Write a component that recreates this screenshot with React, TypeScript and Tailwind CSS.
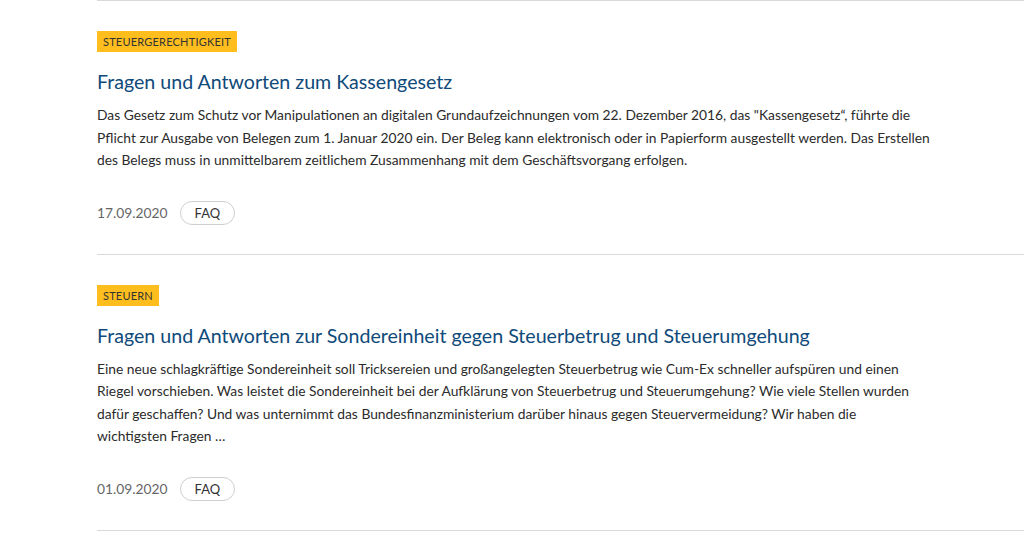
const items = [
  {
    tag: "Steuergerechtigkeit",
    title: "Fragen und Antworten zum Kassengesetz",
    text: "Das Gesetz zum Schutz vor Manipulationen an digitalen Grundaufzeichnungen vom 22. Dezember 2016, das \"Kassengesetz\u201c, führte die Pflicht zur Ausgabe von Belegen zum 1. Januar 2020 ein. Der Beleg kann elektronisch oder in Papierform ausgestellt werden. Das Erstellen des Belegs muss in unmittelbarem zeitlichem Zusammenhang mit dem Geschäftsvorgang erfolgen.",
    date: "17.09.2020",
  },
  {
    tag: "Steuern",
    title: "Fragen und Antworten zur Sondereinheit gegen Steuerbetrug und Steuerumgehung",
    text: "Eine neue schlagkräftige Sondereinheit soll Tricksereien und großangelegten Steuerbetrug wie Cum-Ex schneller aufspüren und einen Riegel vorschieben. Was leistet die Sondereinheit bei der Aufklärung von Steuerbetrug und Steuerumgehung? Wie viele Stellen wurden dafür geschaffen? Und was unternimmt das Bundesfinanzministerium darüber hinaus gegen Steuervermeidung? Wir haben die wichtigsten\u00a0Fragen\u00a0…",
    date: "01.09.2020",
  },
];

export default function App() {
  return (
    <div className="min-h-screen bg-white pl-[97px]" style={{ fontFamily: "Lato, 'Noto Sans', sans-serif" }}>
      <ul className="border-t border-[#d9d9d9]">
        {items.map((item, i) => (
          <li key={i} className="border-b border-[#d9d9d9] pt-[30px] pb-[29px]">
            <div className="flex">
              <span className="block bg-[#ffbe1e] px-[6px] py-[3px] text-[11px] leading-[15px] uppercase text-[#333] tracking-[0.2px]">
                {item.tag}
              </span>
            </div>
            <h2 className="mt-[16px] text-[19.6px] leading-[28px] text-[#0f4a7a]">{item.title}</h2>
            <p className="mt-[8px] max-w-[838px] text-[13.8px] leading-[22.5px] text-[#2b2b2b]">{item.text}</p>
            <div className="mt-[29px] flex items-center gap-[12px]">
              <span className="text-[13.8px] leading-[24px] text-[#666]">{item.date}</span>
              <span className="rounded-full border border-[#cfcfcf] px-[14px] py-[2px] text-[13px] leading-[18px] text-[#333]">FAQ</span>
            </div>
          </li>
        ))}
      </ul>
    </div>
  );
}
